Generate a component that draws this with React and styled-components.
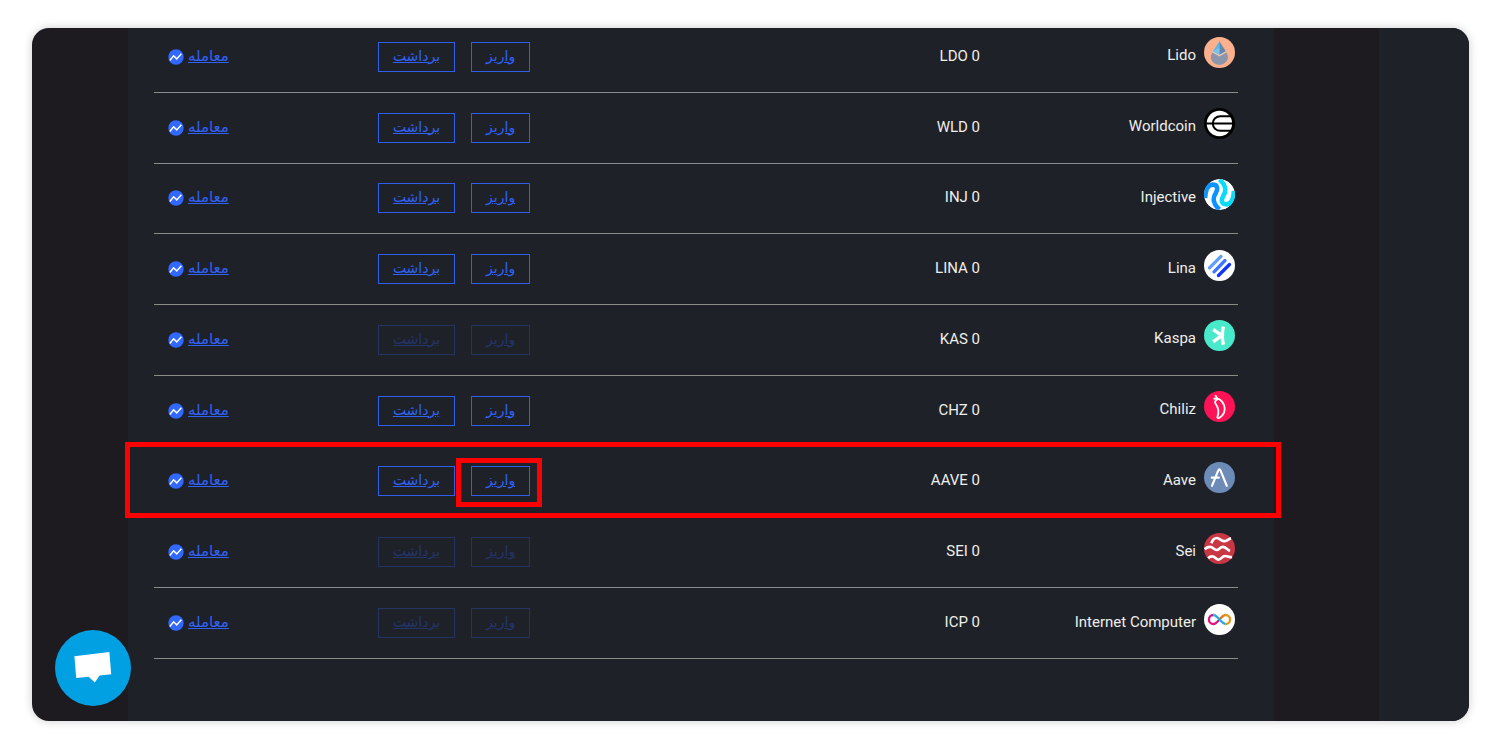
import React from "react";
import styled, { createGlobalStyle } from "styled-components";

const coins = [
  { name: "Lido", symbol: "LDO", active: true },
  { name: "Worldcoin", symbol: "WLD", active: true },
  { name: "Injective", symbol: "INJ", active: true },
  { name: "Lina", symbol: "LINA", active: true },
  { name: "Kaspa", symbol: "KAS", active: false },
  { name: "Chiliz", symbol: "CHZ", active: true },
  { name: "Aave", symbol: "AAVE", active: true, marked: true },
  { name: "Sei", symbol: "SEI", active: false },
  { name: "Internet Computer", symbol: "ICP", active: false },
];

const logos = {
  LDO: (
    <>
      <circle cx="15.5" cy="15.5" r="15.5" fill="#fbb18d" />
      <path d="M8.4 15.6 15.4 19.6 22.4 15.6C24.4 18.6 24.4 22.4 22 25a8.9 8.9 0 0 1-13.2 0C6.4 22.4 6.4 18.6 8.4 15.6Z" fill="#8b95ac" />
      <path d="M8.6 14.6 15.4 18.4 22.2 14.6" fill="none" stroke="#d5d3d0" strokeWidth="1.2" />
      <path d="M15.4 4.2 9 14.2l6.4 3.6Z" fill="#5cb8e6" />
      <path d="M15.4 4.2 21.8 14.2l-6.4 3.6Z" fill="#6788ac" />
      <path d="M9 14.2l6.4-3.4v7Z" fill="#79c4ea" />
    </>
  ),
  WLD: (
    <>
      <circle cx="15.5" cy="15.5" r="15.5" fill="#000" />
      <circle cx="15.4" cy="15.5" r="12.7" fill="#fff" />
      <path d="M29 8.2H16.4a7.6 7.3 0 0 0 0 14.6H29" fill="none" stroke="#000" strokeWidth="2" />
      <path d="M2 15.5h27" fill="none" stroke="#000" strokeWidth="2.2" />
    </>
  ),
  INJ: (
    <>
      <clipPath id="injClip">
        <circle cx="15.5" cy="15.5" r="15.5" />
      </clipPath>
      <g clipPath="url(#injClip)" fill="none" strokeWidth="4.6">
        <circle cx="15.5" cy="15.5" r="15.5" fill="#fff" />
        <path d="M1 19C1.6 10 4 5.6 8.6 5.6 13.6 5.6 14.2 9.4 11.8 14 8.4 19 8.8 25 15.5 30.5" stroke="#0b93ff" />
        <path d="M30 12C29.4 21 27 25.4 22.4 25.4 17.4 25.4 16.8 21.6 19.2 17 22.6 12 22.2 6 15.5.5" stroke="#08dcfb" />
      </g>
    </>
  ),
  LINA: (
    <>
      <circle cx="15.5" cy="15.5" r="15.5" fill="#fff" />
      <g fill="none" strokeWidth="3.3" strokeLinecap="round">
        <path d="M5.5 17.8 17 6.4" stroke="#619dff" />
        <path d="M10 21.8 21 10.5" stroke="#3d77ff" />
        <path d="M14.5 25.5 25.5 14.5" stroke="#0f36ff" />
      </g>
    </>
  ),
  KAS: (
    <>
      <circle cx="15.5" cy="15.5" r="15.5" fill="#49eacb" />
      <path d="M19.4 6.6Q17.2 15.5 19.4 24.6M9.2 9.4 17.6 15.5 9.2 21.8" fill="none" stroke="#fff" strokeWidth="3.4" />
    </>
  ),
  CHZ: (
    <>
      <circle cx="15.5" cy="15.5" r="15.5" fill="#ff1256" />
      <path
        d="M12.2 9.2C11 10 10.6 11.4 11.6 12.8 14.6 17 15.4 21 13.4 25.8 13.2 27 14 27.4 15.2 27 19.6 24.4 21.6 19.6 20.2 14.6 19.2 11.4 17 9.2 15.2 8.2 14 7.6 13 8.4 12.2 9.2ZM13.6 7.8 11.2 4.2M13.2 7.8 9.4 7.6"
        fill="none"
        stroke="#fff"
        strokeWidth="1.8"
        strokeLinejoin="round"
      />
    </>
  ),
  AAVE: (
    <>
      <circle cx="15.5" cy="15.5" r="15.5" fill="#6c8bb7" />
      <path d="M8 23.8 14.3 8.4Q15.4 6.2 16.5 8.4L22.8 23.8M7.8 15.7H14.8" fill="none" stroke="#fff" strokeWidth="2.2" strokeLinecap="round" />
    </>
  ),
  SEI: (
    <>
      <circle cx="15.5" cy="15.5" r="15.5" fill="#c93745" />
      <g fill="none" stroke="#fff" strokeWidth="2.7">
        <path d="M7.4 10.2C8.6 6.6 10.4 5 12.8 5 15.6 5 17 8 20 8.2 22.8 8.4 24.4 5.8 27 5.4" />
        <path d="M.6 16.2C2.4 14.6 4 13.8 6 13.8 9 13.8 10 17 12.6 17 15.2 17 16 13.8 18.8 13.8 21.8 13.8 23 17 26 18" />
        <path d="M4.2 25.2C5.4 24 6.600 23.400 8.200 23.400 11 23.400 12 26.600 14.600 26.600 17.200 26.600 18 23 21 23 23.600 23 24.800 24.800 28 24" />
      </g>
    </>
  ),
  ICP: (
    <>
      <defs>
        <linearGradient id="icpLeft" x1="0" y1="1" x2="1" y2="0">
          <stop offset="0.3" stopColor="#ec1284" />
          <stop offset="1" stopColor="#70348f" />
        </linearGradient>
        <linearGradient id="icpRight" x1="0" y1="0" x2="1" y2="0">
          <stop offset="0" stopColor="#e8622c" />
          <stop offset="0.6" stopColor="#e0981a" />
        </linearGradient>
      </defs>
      <circle cx="15.5" cy="15.5" r="15.5" fill="#fff" />
      <g fill="none" strokeWidth="2.3">
        <path d="M15.5 15.5C13.2 18 11.6 20 9.4 20A4.5 4.5 0 0 1 9.4 11" stroke="url(#icpLeft)" />
        <path d="M15.5 15.5C17.8 13 19.4 11 21.6 11A4.5 4.5 0 0 1 21.6 20" stroke="url(#icpRight)" />
        <path d="M9.4 11C13.6 11 17.4 20 21.6 20" stroke="#29abe2" />
      </g>
    </>
  ),
};

const CoinRow = ({ coin }) => {
  const { name, symbol, active, marked } = coin;

  return (
    <Row>
      <Cell $marked={marked}>
        <Coin>
          <Logo viewBox="0 0 31 31" aria-hidden="true">{logos[symbol]}</Logo>
          <CoinName>{name}</CoinName>
        </Coin>
      </Cell>
      <Cell>
        <Amount dir="ltr">{`${symbol} 0`}</Amount>
      </Cell>
      <Cell>
        <Actions>
          <ActionLink href="#deposit" $marked={marked} $off={!active} aria-disabled={!active}>واریز</ActionLink>
          <ActionLink href="#withdraw" $off={!active} aria-disabled={!active}>برداشت</ActionLink>
        </Actions>
      </Cell>
      <Cell>
        <TradeLink href="#trade">
          <TradeText>معامله</TradeText>
          <TradeIcon viewBox="0 0 16 16" aria-hidden="true">
            <circle cx="8" cy="8" r="7.7" fill="#3168ff" />
            <path d="M1.8 11.4 5.6 6.8 8.7 9.9 13.4 4.8" fill="none" stroke="#fff" strokeWidth="1.5" />
          </TradeIcon>
        </TradeLink>
      </Cell>
    </Row>
  );
};

const App = () => {
  return (
    <>
      <GlobalStyle />
      <Frame dir="rtl">
        <SideBar />
        <Panel>
          <Table>
            <colgroup>
              <Col $width="23.8%" />
              <Col $width="41.5%" />
              <Col $width="27.8%" />
              <Col />
            </colgroup>
            <tbody>
              {coins.map((coin) => (
                <CoinRow key={coin.symbol} coin={coin} />
              ))}
            </tbody>
          </Table>
        </Panel>
        <ChatButton type="button" aria-label="گفتگو">
          <svg width="38" height="34" viewBox="0 0 38 34" aria-hidden="true">
            <path d="M.4 5.2 35.4.9 37.2 23.2 25.6 24.4 20.8 31.6 14.6 25.8 2.2 27Z" fill="#fff" />
          </svg>
        </ChatButton>
      </Frame>
    </>
  );
};

export default App;

const GlobalStyle = createGlobalStyle`
  * {
    box-sizing: border-box;
  }
  body {
    margin: 0;
    background: #fff;
    font-family: Roboto, "DejaVu Sans", sans-serif;
    font-size: 15px;
    color: #eeeeea;
  }
`
const Frame = styled.main`
  position: relative;
  display: flex;
  margin: 28px 31px 29px 32px;
  overflow: hidden;
  border-radius: 17px;
  background: #1d1b1f;
  box-shadow: 0 0 10px rgba(0, 0, 0, 0.2);
`
const SideBar = styled.aside`
  flex: 0 0 90px;
  margin-left: 105px;
  background: #1f2129;
`
const Panel = styled.section`
  flex: 1;
  margin-left: 96px;
  padding: 0 36px 62px 26px;
  background: #1f2129;
`
/* the list is scrolled, so its first row starts above the frame */
const Table = styled.table`
  width: 100%;
  height: 637px;
  margin-top: -6px;
  table-layout: fixed;
  border-spacing: 0;
`
const Col = styled.col`
  width: ${({ $width }) => $width || "auto"};
`
const Row = styled.tr`
  position: relative;
`
const Cell = styled.td`
  padding: 0;
  vertical-align: middle;
  white-space: nowrap;
  border-bottom: 1px solid #8b8b88;

  /* frames the whole row, which is the positioned parent */
  ${({ $marked }) => $marked && `
    &::after {
      content: "";
      position: absolute;
      inset: -5px -43px -1px -29px;
      border: 5px solid #f00;
      pointer-events: none;
    }
  `}
`
const Coin = styled.div`
  display: flex;
  align-items: center;
  gap: 8px;
  padding: 0 3px 8px 0;
`
const Logo = styled.svg`
  flex: none;
  width: 31px;
  height: 31px;
`
const CoinName = styled.span`
  padding-top: 5px;
`
const Amount = styled.bdi`
  display: block;
  padding-bottom: 2px;
  text-align: right;
`
const Actions = styled.div`
  display: flex;
  gap: 16px;
`
const ActionLink = styled.a`
  position: relative;
  height: 30px;
  padding: 0 14px;
  border: 1px solid #2f5fe6;
  font-size: 14px;
  line-height: 26px;
  color: #2f62f5;
  opacity: ${({ $off }) => ($off ? 0.3 : 1)};

  ${({ $marked }) => $marked && `
    &::after {
      content: "";
      position: absolute;
      inset: -9px -13px -12px -16px;
      border: 5px solid #f00;
    }
  `}
`
const TradeLink = styled.a`
  display: flex;
  align-items: center;
  gap: 4px;
  color: #2f62f5;
`
const TradeText = styled.span`
  padding-bottom: 2px;
`
const TradeIcon = styled.svg`
  flex: none;
  width: 16px;
  height: 16px;
`
const ChatButton = styled.button`
  position: absolute;
  left: 23px;
  bottom: 15px;
  display: grid;
  place-items: center;
  width: 76px;
  height: 76px;
  padding: 0;
  border: 0;
  border-radius: 50%;
  background: #00a0e3;
  cursor: pointer;
`
